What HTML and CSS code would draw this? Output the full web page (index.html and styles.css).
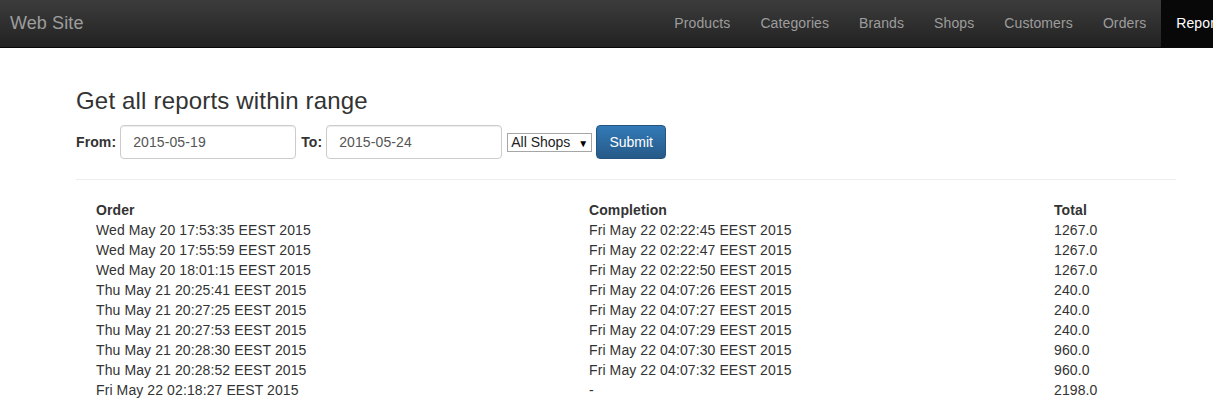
FILE: index.html
```html
<!DOCTYPE html>
<html>
<head>
<meta charset="utf-8">
<title>Reports</title>
<link rel="stylesheet" href="styles.css">
</head>
<body>
<header class="navbar">
  <div class="navbar-inner">
    <a class="brand" href="#">Web Site</a>
    <ul class="nav">
      <li><a href="#">Products</a></li>
      <li><a href="#">Categories</a></li>
      <li><a href="#">Brands</a></li>
      <li><a href="#">Shops</a></li>
      <li><a href="#">Customers</a></li>
      <li><a href="#">Orders</a></li>
      <li class="active"><a href="#">Reports</a></li>
    </ul>
  </div>
</header>
<main class="container">
  <h3 class="title">Get all reports within range</h3>
  <form class="range-form">
    <label class="lbl">From:</label>
    <input class="field" type="text" value="2015-05-19">
    <label class="lbl lbl-to">To:</label>
    <input class="field" type="text" value="2015-05-24">
    <span class="select-wrap"><select class="shops"><option>All Shops</option></select></span>
    <button class="btn" type="button">Submit</button>
  </form>
  <hr class="rule">
  <div class="report">
    <div class="row head"><span>Order</span><span>Completion</span><span>Total</span></div>
    <div class="row"><span>Wed May 20 17:53:35 EEST 2015</span><span>Fri May 22 02:22:45 EEST 2015</span><span>1267.0</span></div>
    <div class="row"><span>Wed May 20 17:55:59 EEST 2015</span><span>Fri May 22 02:22:47 EEST 2015</span><span>1267.0</span></div>
    <div class="row"><span>Wed May 20 18:01:15 EEST 2015</span><span>Fri May 22 02:22:50 EEST 2015</span><span>1267.0</span></div>
    <div class="row"><span>Thu May 21 20:25:41 EEST 2015</span><span>Fri May 22 04:07:26 EEST 2015</span><span>240.0</span></div>
    <div class="row"><span>Thu May 21 20:27:25 EEST 2015</span><span>Fri May 22 04:07:27 EEST 2015</span><span>240.0</span></div>
    <div class="row"><span>Thu May 21 20:27:53 EEST 2015</span><span>Fri May 22 04:07:29 EEST 2015</span><span>240.0</span></div>
    <div class="row"><span>Thu May 21 20:28:30 EEST 2015</span><span>Fri May 22 04:07:30 EEST 2015</span><span>960.0</span></div>
    <div class="row"><span>Thu May 21 20:28:52 EEST 2015</span><span>Fri May 22 04:07:32 EEST 2015</span><span>960.0</span></div>
    <div class="row"><span>Fri May 22 02:18:27 EEST 2015</span><span>-</span><span>2198.0</span></div>
  </div>
</main>
</body>
</html>
```
FILE: styles.css
```css
html, body {
  margin: 0;
  padding: 0;
}
body {
  font-family: "Liberation Sans", Arial, sans-serif;
  font-size: 14px;
  line-height: 20px;
  letter-spacing: 0.1px;
  color: #333;
  background: #fff;
  overflow-x: hidden;
}
.navbar {
  height: 48px;
  background: linear-gradient(to bottom, #3c3c3c 0%, #222 100%);
  border-bottom: 1px solid #080808;
  box-sizing: border-box;
  overflow: hidden;
}
.navbar-inner {
  display: flex;
  align-items: stretch;
  height: 47px;
}
.brand {
  padding: 0 10px;
  font-size: 18px;
  line-height: 47px;
  color: #9d9d9d;
  text-decoration: none;
}
.nav {
  display: flex;
  margin: 0 -28px 0 auto;
  padding: 0;
  list-style: none;
  flex-shrink: 0;
}
.nav li a {
  display: block;
  padding: 0 15px;
  line-height: 47px;
  color: #9d9d9d;
  text-decoration: none;
  font-size: 14px;
  letter-spacing: 0.1px;
}
.nav li.active a {
  color: #fff;
  background: #080808;
}
.container {
  margin-left: 76px;
  width: 1100px;
  padding-top: 40px;
}
.title {
  margin: 0 0 10px;
  font-size: 24px;
  font-weight: 500;
  line-height: 26px;
  letter-spacing: 0.18px;
}
.range-form {
  display: flex;
  align-items: center;
  height: 34px;
  margin-top: 11px;
}
.lbl {
  font-weight: bold;
  margin-right: 4px;
}
.lbl-to {
  margin-left: 5px;
}
.field {
  width: 176px;
  height: 34px;
  box-sizing: border-box;
  padding: 6px 12px;
  border: 1px solid #ccc;
  border-radius: 4px;
  font-family: inherit;
  font-size: 14px;
  letter-spacing: 0.1px;
  color: #555;
  box-shadow: inset 0 1px 1px rgba(0,0,0,.075);
}
.select-wrap {
  position: relative;
  margin-left: 5px;
  margin-right: 4px;
}
.select-wrap::after {
  content: "\25BC";
  position: absolute;
  right: 4px;
  top: 2px;
  font-size: 10px;
  color: #000;
  pointer-events: none;
}
.shops {
  -webkit-appearance: none;
  appearance: none;
  width: 85px;
  height: 19px;
  box-sizing: border-box;
  border: 1px solid #a6a6a6;
  border-radius: 0;
  background: #fff;
  padding: 0 0 0 3px;
  font-family: inherit;
  font-size: 14px;
  line-height: 17px;
  color: #222;
}
.btn {
  width: 70px;
  height: 34px;
  border: 1px solid #245580;
  border-radius: 4px;
  background: linear-gradient(to bottom, #337ab7 0%, #265a88 100%);
  color: #fff;
  font-family: inherit;
  font-size: 14px;
  padding: 0;
}
.rule {
  margin: 20px 0 20px;
  border: 0;
  border-top: 1px solid #eee;
}
.report {
  padding-left: 20px;
}
.row {
  display: grid;
  grid-template-columns: 493px 465px 1fr;
}
.row.head {
  font-weight: bold;
}
```
